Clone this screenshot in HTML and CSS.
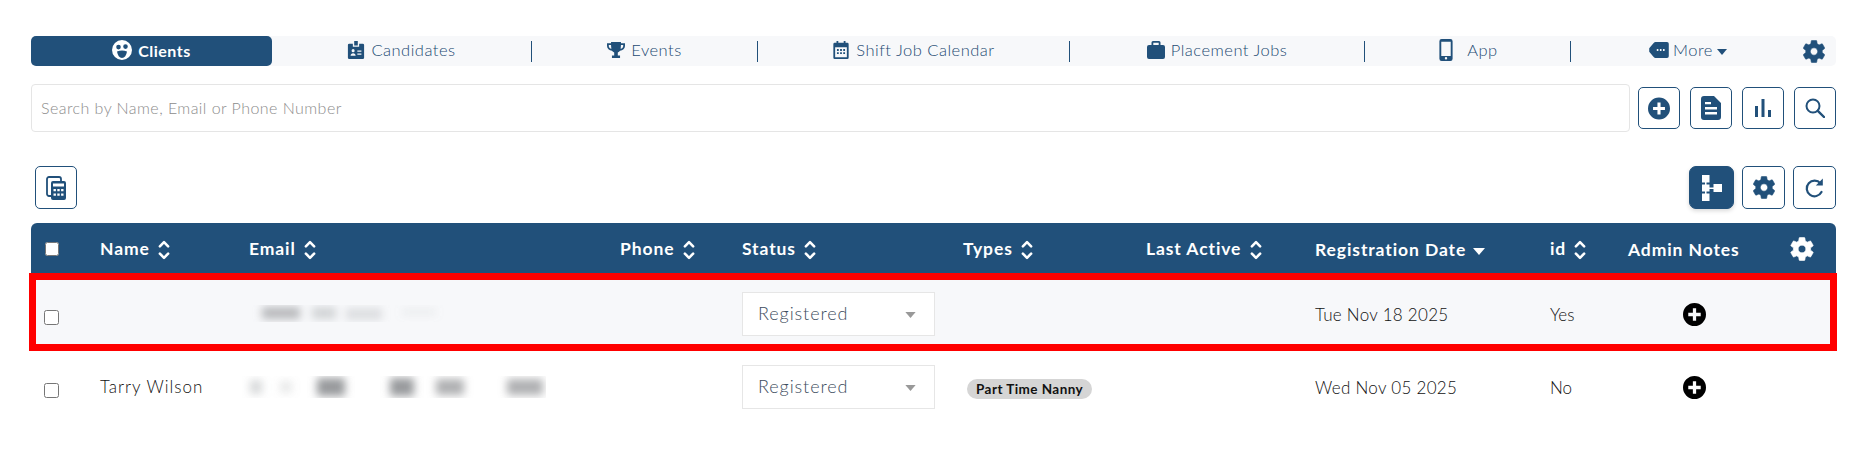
FILE: index.html
```html
<!DOCTYPE html>
<html lang="en">
<head>
  <meta charset="UTF-8">
  <title>Clients</title>
  <link rel="stylesheet" href="styles.css">
</head>
<body>
  <svg class="sprites" width="0" height="0">
    <filter id="soft"><feGaussianBlur stdDeviation="4"/></filter>
    <symbol id="i-gear" viewBox="2.500 2 19 20"><path d="M19.14 12.94c.04-.3.06-.61.06-.94 0-.32-.02-.64-.07-.94l2.03-1.58c.18-.14.23-.41.12-.61l-1.92-3.32c-.12-.22-.37-.29-.59-.22l-2.39.96c-.5-.38-1.03-.7-1.62-.94l-.36-2.54c-.04-.24-.24-.41-.48-.41h-3.84c-.24 0-.43.17-.47.41l-.36 2.54c-.59.24-1.13.57-1.62.94l-2.39-.96c-.22-.08-.47 0-.59.22L2.74 8.87c-.12.21-.08.47.12.61l2.03 1.58c-.05.3-.09.63-.09.94s.02.64.07.94l-2.03 1.58c-.18.14-.23.41-.12.61l1.92 3.32c.12.22.37.29.59.22l2.39-.96c.5.38 1.03.7 1.62.94l.36 2.54c.05.24.24.41.48.41h3.84c.24 0 .44-.17.47-.41l.36-2.54c.59-.24 1.13-.56 1.62-.94l2.39.96c.22.08.47 0 .59-.22l1.92-3.32c.12-.22.07-.47-.12-.61l-2.01-1.58zM12 15.200c-1.780 0-3.200-1.420-3.200-3.200s1.420-3.200 3.200-3.200 3.200 1.420 3.200 3.200-1.420 3.200-3.200 3.200z" fill="currentColor" stroke="currentColor" stroke-width=".5"/></symbol>
    <symbol id="i-plus" viewBox="0 0 24 24"><path fill-rule="evenodd" d="M12 0a12 12 0 1 0 0 24 12 12 0 0 0 0-24zM10.3 5.5h3.4v4.8h4.8v3.4h-4.8v4.8h-3.4v-4.8H5.5v-3.4h4.8z" fill="currentColor"/></symbol>
    <symbol id="i-sort" viewBox="0 0 14 24"><path d="M2.500 8l4.500-4.500 4.500 4.500M2.500 16l4.500 4.500 4.500-4.500" fill="none" stroke="currentColor" stroke-width="2.800" stroke-linecap="round" stroke-linejoin="round"/></symbol>
    <symbol id="i-caret" viewBox="0 0 12 7"><path d="M0 0h12L6 7z" fill="currentColor"/></symbol>
  </svg>

  <div class="page">
    <nav class="tabs">
      <a class="tab active" href="#">
        <svg class="tab-icon" viewBox="0 0 20 20"><path fill-rule="evenodd" d="M10 0a10 10 0 1 0 0 20 10 10 0 0 0 0-20zM6.500 4.800a2.300 2.300 0 1 1 0 4.600 2.300 2.300 0 0 1 0-4.600zM13.500 4.300a2.300 2.300 0 1 1 0 4.600 2.300 2.300 0 0 1 0-4.600zM5 11.500q5-2 10 0-1 6-5 6.500-4-.5-5-6.500z" fill="currentColor"/></svg>
        Clients
      </a>
      <a class="tab" href="#">
        <svg class="tab-icon" viewBox="0 0 18 20"><path fill-rule="evenodd" d="M7 0h4v5H7zM1.500 3H5.500v3.500h7V3h4A1.500 1.500 0 0 1 18 4.500v14a1.500 1.500 0 0 1-1.500 1.500h-15A1.500 1.500 0 0 1 0 18.500v-14A1.500 1.500 0 0 1 1.500 3zM5.800 9a1.700 1.700 0 1 0 0 3.400 1.700 1.700 0 0 0 0-3.400zM3 16.500h5.600c0-1.800-1.200-3-2.800-3S3 14.700 3 16.500zM10.500 10.500v1.400H15v-1.400zM10.500 14v1.400H15V14z" fill="currentColor"/></svg>
        Candidates
      </a>
      <i class="sep"></i>
      <a class="tab" href="#">
        <svg class="tab-icon" viewBox="0 0 20 18"><path d="M4.500 0h11v1.500H20v3c0 3-2.500 5-5.500 5.300-.7 1-1.500 1.600-2.500 1.900v3.300h2.500V18h-9v-3h2.500v-3.300c-1-.3-1.800-.9-2.500-1.900C2.500 9.500 0 7.500 0 4.500v-3h4.500zM2 3.500v1c0 1.500 1 2.800 2.900 3.200C4.700 6.500 4.500 5 4.500 3.500zM18 3.500h-2.500c0 1.500-.2 3-.4 4.200C17 7.300 18 6 18 4.500z" fill="currentColor"/></svg>
        Events
      </a>
      <i class="sep"></i>
      <a class="tab" href="#">
        <svg class="tab-icon" viewBox="0 0 17 20"><path fill-rule="evenodd" d="M3.500 0h2v2h6V0h2v2h2A1.500 1.500 0 0 1 17 3.500v15a1.500 1.500 0 0 1-1.500 1.500h-14A1.500 1.500 0 0 1 0 18.500v-15A1.500 1.500 0 0 1 1.500 2h2zM2 7v11h13V7zM4 9h2v2H4zM7.500 9h2v2h-2zM11 9h2v2h-2zM4 12.500h2v2H4zM7.500 12.500h2v2h-2zM11 12.500h2v2h-2z" fill="currentColor"/></svg>
        Shift Job Calendar
      </a>
      <i class="sep"></i>
      <a class="tab" href="#">
        <svg class="tab-icon" viewBox="0 0 18 18"><path fill-rule="evenodd" d="M6 0h6a1.500 1.500 0 0 1 1.500 1.500V4h2.500A2 2 0 0 1 18 6v10a2 2 0 0 1-2 2H2a2 2 0 0 1-2-2V6a2 2 0 0 1 2-2h2.500V1.500A1.500 1.500 0 0 1 6 0zM6.300 1.800V4h5.400V1.800z" fill="currentColor"/></svg>
        Placement Jobs
      </a>
      <i class="sep"></i>
      <a class="tab" href="#">
        <svg class="tab-icon icon-phone" viewBox="0 0 12 20"><path fill-rule="evenodd" d="M2 0h8a2 2 0 0 1 2 2v16a2 2 0 0 1-2 2H2a2 2 0 0 1-2-2V2a2 2 0 0 1 2-2zM1.700 2.500v13h8.600v-13zM6 16.400a1.100 1.100 0 1 0 0 2.200 1.100 1.100 0 0 0 0-2.200z" fill="currentColor"/></svg>
        App
      </a>
      <i class="sep"></i>
      <a class="tab tab-more" href="#">
        <svg class="icon-more" viewBox="0 0 22 18"><path fill-rule="evenodd" d="M7 0h13a2 2 0 0 1 2 2v14a2 2 0 0 1-2 2H7q-1 0-2-1L0 11V7l5-6q1-1 2-1zM8.500 8v2h1.800V8zM12 8v2h1.800V8zM15.500 8v2h1.800V8z" fill="currentColor"/></svg>
        More
        <svg class="icon-caret"><use href="#i-caret"/></svg>
      </a>
      <a class="tab-gear" href="#"><svg><use href="#i-gear"/></svg></a>
    </nav>

    <div class="search-row">
      <input class="search" type="text" placeholder="Search by Name, Email or Phone Number">
      <button class="icon-btn">
        <svg class="ic-22"><use href="#i-plus"/></svg>
      </button>
      <button class="icon-btn">
        <svg class="ic-doc" viewBox="0 0 20 24"><path fill-rule="evenodd" d="M3 0h10l7 7v14a3 3 0 0 1-3 3H3a3 3 0 0 1-3-3V3a3 3 0 0 1 3-3zM4 6v2.200h6V6zM4 11v2.400h12V11zM4 16v2.400h12V16z" fill="currentColor"/></svg>
      </button>
      <button class="icon-btn">
        <svg class="ic-bars" viewBox="0 0 16 18"><path d="M0 7h3v11H0zM6.500 0h3v18h-3zM13 11h3v7h-3z" fill="currentColor"/></svg>
      </button>
      <button class="icon-btn">
        <svg class="ic-search" viewBox="0 0 20 20"><circle cx="8" cy="8" r="6.500" fill="none" stroke="currentColor" stroke-width="2"/><path d="M12.800 12.800L19 19" stroke="currentColor" stroke-width="2.400" stroke-linecap="round"/></svg>
      </button>
    </div>

    <div class="tool-row">
      <button class="icon-btn">
        <svg class="ic-calc" viewBox="0 0 20 24"><path d="M5 20H3a2 2 0 0 1-2-2V3a2 2 0 0 1 2-2h10a2 2 0 0 1 2 2v2" fill="none" stroke="currentColor" stroke-width="1.800"/><path fill-rule="evenodd" d="M7 5h11a2 2 0 0 1 2 2v15a2 2 0 0 1-2 2H7a2 2 0 0 1-2-2V7a2 2 0 0 1 2-2zM7 7.500v3h11v-3zM7.500 13v2.200h2.400V13zM11.300 13v2.200h2.400V13zM15.100 13v2.200h2.400V13zM7.500 17.500v2.200h2.400v-2.200zM11.300 17.500v2.200h2.400v-2.200zM15.100 17.500v2.200h2.400v-2.200z" fill="currentColor"/></svg>
      </button>
      <div class="tool-right">
        <button class="icon-btn filled">
          <svg class="ic-tree" viewBox="0 0 20 26"><path d="M0 0h7.500v7.500H0zM0 9.500h7.500v7H0zM0 18.500h7.500V26H0zM11.500 9h8.500v8h-8.500zM3 7.500h1.500v2H3zM3 16.500h1.500v2H3zM7.500 12.500h4v1.500h-4z" fill="currentColor"/></svg>
        </button>
        <button class="icon-btn"><svg class="ic-22"><use href="#i-gear"/></svg></button>
        <button class="icon-btn">
          <svg class="ic-refresh" viewBox="0 0 20 22"><path d="M16.500 15a7.800 7.800 0 1 1-1-8.600" fill="none" stroke="currentColor" stroke-width="2.200" stroke-linecap="round"/><path d="M17.800 1.500v7h-7z" fill="currentColor"/></svg>
        </button>
      </div>
    </div>

    <div class="table-wrap">
      <table class="clients">
        <colgroup>
          <col class="c-check"><col class="c-name"><col class="c-email"><col class="c-phone"><col class="c-status">
          <col class="c-types"><col class="c-active"><col class="c-date"><col class="c-id"><col class="c-notes"><col class="c-gear">
        </colgroup>
        <thead>
          <tr>
            <th class="check-cell"><input class="head-check" type="checkbox"></th>
            <th>Name <svg class="sort"><use href="#i-sort"/></svg></th>
            <th>Email <svg class="sort"><use href="#i-sort"/></svg></th>
            <th>Phone <svg class="sort"><use href="#i-sort"/></svg></th>
            <th>Status <svg class="sort"><use href="#i-sort"/></svg></th>
            <th>Types <svg class="sort"><use href="#i-sort"/></svg></th>
            <th>Last Active <svg class="sort"><use href="#i-sort"/></svg></th>
            <th>Registration Date <svg class="sort-caret"><use href="#i-caret"/></svg></th>
            <th>id <svg class="sort"><use href="#i-sort"/></svg></th>
            <th>Admin Notes</th>
            <th class="gear-cell"><svg class="head-gear"><use href="#i-gear"/></svg></th>
          </tr>
        </thead>
        <tbody>
          <tr class="row-alt">
            <td class="check-cell"><input class="row-check" type="checkbox"></td>
            <td></td>
            <td class="email-cell">
              <svg class="redact" viewBox="0 0 304 30" width="304" height="30">
                <g fill="#8d8f92" filter="url(#soft)">
                  <rect x="20" y="8" width="38" height="12" opacity=".6"/>
                  <rect x="70" y="8" width="24" height="12" opacity=".35"/>
                  <rect x="104" y="9" width="36" height="12" opacity=".25"/>
                  <rect x="160" y="9" width="34" height="8" opacity=".1"/>
                </g>
              </svg>
            </td>
            <td></td>
            <td><div class="status-select">Registered<svg class="icon-caret"><use href="#i-caret"/></svg></div></td>
            <td></td>
            <td></td>
            <td class="date-cell">Tue Nov 18 2025</td>
            <td>Yes</td>
            <td class="notes-cell"><svg class="note-add"><use href="#i-plus"/></svg></td>
            <td></td>
          </tr>
          <tr>
            <td class="check-cell"><input class="row-check" type="checkbox"></td>
            <td class="client-name">Tarry Wilson</td>
            <td class="email-cell">
              <svg class="redact" viewBox="0 0 304 30" width="304" height="30">
                <g fill="#8d8f92" filter="url(#soft)">
                  <rect x="8" y="8" width="12" height="14" opacity=".35"/>
                  <rect x="38" y="9" width="12" height="12" opacity=".2"/>
                  <rect x="75" y="6" width="28" height="18" opacity=".9"/>
                  <rect x="148" y="6" width="24" height="18" opacity=".9"/>
                  <rect x="194" y="7" width="28" height="16" opacity=".7"/>
                  <rect x="265" y="7" width="36" height="16" opacity=".7"/>
                </g>
              </svg>
            </td>
            <td></td>
            <td><div class="status-select">Registered<svg class="icon-caret"><use href="#i-caret"/></svg></div></td>
            <td><span class="chip">Part Time Nanny</span></td>
            <td></td>
            <td class="date-cell">Wed Nov 05 2025</td>
            <td>No</td>
            <td class="notes-cell"><svg class="note-add"><use href="#i-plus"/></svg></td>
            <td></td>
          </tr>
        </tbody>
      </table>
      <div class="highlight"></div>
    </div>
  </div>
</body>
</html>
```

FILE: styles.css
```css
html {
  box-sizing: border-box;
}
*, *::before, *::after {
  box-sizing: inherit;
}
body {
  margin: 0;
  background: #fff;
  font-family: "Lato", "Noto Sans", sans-serif;
  font-size: 16px;
  color: #111;
}
.sprites {
  position: absolute;
}
.page {
  padding: 36px 27px 0 31px;
}

/* top tabs */
.tabs {
  display: grid;
  grid-template-columns: 241px 259px 1px 225px 1px 311px 1px 294px 1px 205px 1px 1fr 33px;
  align-items: center;
  height: 30px;
  background: #f7f8fa;
  border-radius: 5px;
}
.tab {
  display: flex;
  justify-content: center;
  align-items: center;
  gap: 6px;
  height: 30px;
  padding-bottom: 2px;
  color: #1d4a72;
  font-size: 16.5px;
  font-weight: 300;
  letter-spacing: 0.5px;
  text-decoration: none;
}
.tab.active {
  background: #21507a;
  border-radius: 5px;
  color: #fff;
  font-size: 16px;
  font-weight: 700;
}
.tab-icon {
  width: 18px;
  height: 18px;
  color: #21507a;
}
.tab.active .tab-icon {
  width: 20px;
  height: 20px;
  color: #fff;
}
.icon-phone {
  height: 22px;
  margin-right: 6px;
}
.tab-more {
  gap: 4px;
  padding-left: 2px;
}
.icon-more {
  width: 20px;
  height: 16px;
  color: #21507a;
}
.icon-caret {
  width: 10px;
  height: 6px;
  color: #21507a;
  margin-top: 3px;
}
.sep {
  display: block;
  width: 1px;
  height: 21px;
  background: #21507a;
}
.tab-gear {
  color: #21507a;
  line-height: 0;
}
.tab-gear svg {
  width: 22px;
  height: 23px;
}

/* search and tool rows */
.search-row {
  display: flex;
  align-items: center;
  gap: 10px;
  margin-top: 18px;
}
.search {
  flex: 1;
  height: 48px;
  margin-right: -2px;
  padding: 0 9px 2px;
  border: 1px solid #e5e5e5;
  border-radius: 4px;
  font: inherit;
  font-weight: 300;
  letter-spacing: 0.45px;
}
.search::placeholder {
  color: #8c8c8c;
}
.icon-btn {
  display: flex;
  justify-content: center;
  align-items: center;
  width: 42px;
  height: 42px;
  padding: 0;
  background: #fff;
  border: 1px solid #21507a;
  border-radius: 5px;
  color: #21507a;
}
.tool-row {
  display: flex;
  justify-content: space-between;
  align-items: center;
  margin-top: 34px;
  padding-left: 4px;
}
.tool-row .icon-btn {
  height: 43px;
}
.tool-right {
  display: flex;
  gap: 8px;
}
.tool-right .icon-btn {
  width: 43px;
}
.tool-right .icon-btn.filled {
  width: 45px;
  background: #21507a;
  border-radius: 7px;
  color: #fff;
  box-shadow: 0 2px 4px rgba(0, 0, 0, 0.15);
}
.ic-22 {
  width: 22px;
  height: 23px;
}
.ic-doc {
  width: 20px;
  height: 24px;
}
.ic-bars {
  width: 16px;
  height: 18px;
}
.ic-search {
  width: 20px;
  height: 20px;
}
.ic-calc {
  width: 20px;
  height: 24px;
}
.ic-tree {
  width: 20px;
  height: 26px;
}
.ic-refresh {
  width: 20px;
  height: 22px;
}

/* table */
.table-wrap {
  position: relative;
  margin-top: 14px;
}
.clients {
  width: 100%;
  border-collapse: collapse;
  table-layout: fixed;
}
.c-check { width: 54px; }
.c-name { width: 149px; }
.c-email { width: 371px; }
.c-phone { width: 122px; }
.c-status { width: 221px; }
.c-types { width: 183px; }
.c-active { width: 169px; }
.c-date { width: 235px; }
.c-id { width: 78px; }
.c-notes { width: 162px; }
.c-gear { width: 61px; }
.clients th {
  height: 55px;
  padding: 0 0 2px 15px;
  background: #21507a;
  color: #fff;
  font-size: 17.5px;
  font-weight: 700;
  letter-spacing: 0.9px;
  text-align: left;
  white-space: nowrap;
}
.clients th:first-child {
  border-top-left-radius: 6px;
}
.clients th:last-child {
  border-top-right-radius: 6px;
}
.clients td {
  height: 73px;
  padding: 0 0 0 15px;
  font-size: 17px;
  font-weight: 300;
  white-space: nowrap;
}
.clients .client-name {
  padding-bottom: 2px;
  letter-spacing: 1px;
}
.clients .date-cell {
  letter-spacing: 0.3px;
}
.row-alt td {
  background: #f7f8fa;
}
.check-cell {
  padding: 0 0 0 13px !important;
}
.head-check {
  display: block;
  width: 14px;
  height: 14px;
  margin: -4px 0 0 1px;
}
.row-check {
  display: block;
  width: 15px;
  height: 15px;
  margin: 6px 0 0;
}
.sort {
  width: 14px;
  height: 22px;
  margin-left: 2px;
  vertical-align: middle;
}
.sort-caret {
  width: 12px;
  height: 7px;
  margin-left: 2px;
  vertical-align: middle;
}
.gear-cell {
  padding: 0 0 0 15px !important;
}
.head-gear {
  display: block;
  width: 24px;
  height: 24px;
  margin-top: -3px;
}
.email-cell {
  padding: 0 !important;
}
.redact {
  display: block;
  margin-left: 8px;
  margin-top: -2px;
}
.status-select {
  display: flex;
  justify-content: space-between;
  align-items: center;
  width: 193px;
  height: 44px;
  margin-top: -1px;
  padding: 0 18px 3px 15px;
  background: #fff;
  border: 1px solid #e6e6e6;
  color: #3d4d5e;
  font-size: 18px;
  letter-spacing: 0.9px;
}
.status-select .icon-caret {
  width: 11px;
  height: 6px;
  margin: 5px 0 0;
  color: #999;
}
.chip {
  display: inline-block;
  margin-left: 4px;
  padding: 0 9px;
  background: #d5d5d5;
  border-radius: 10px;
  color: #111;
  font-size: 13.5px;
  font-weight: 700;
  letter-spacing: 0.45px;
  line-height: 20px;
}
.notes-cell {
  padding: 0 !important;
  text-align: center;
}
.note-add {
  display: inline-block;
  width: 23px;
  height: 23px;
  color: #000;
  vertical-align: middle;
  margin-top: -4px;
}

/* red marker drawn over the first row */
.highlight {
  position: absolute;
  top: 50px;
  left: -2px;
  right: -1px;
  height: 78px;
  border: 7px solid #f00;
  pointer-events: none;
}
```
